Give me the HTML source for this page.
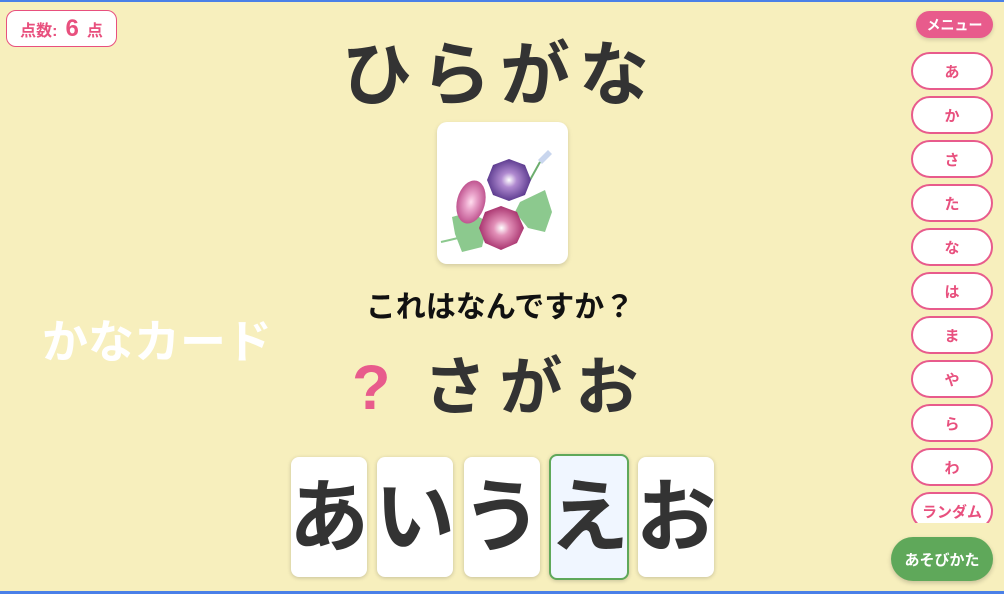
<!DOCTYPE html>
<html><head><meta charset="utf-8"><style>
*{margin:0;padding:0;box-sizing:border-box}
body{width:1004px;height:594px;overflow:hidden;background:#f7efbd;font-family:"Liberation Sans","Noto Sans CJK JP",sans-serif;position:relative;border-top:2px solid #4a80e8;border-bottom:3px solid #4a80e8}
.a{position:absolute}
.score{left:6px;top:8px;width:111px;height:37px;border:1.5px solid #e8507e;border-radius:10px;background:#fff;color:#e8507e;font-size:16px;font-weight:bold;display:flex;align-items:center;justify-content:center;gap:4px}
.score b{font-size:24px;margin:0 4px}
.title{left:0;width:1000px;top:28px;text-align:center;font-size:70px;font-weight:bold;color:#333;letter-spacing:9px;line-height:90px}
.card{left:437px;top:120px;width:131px;height:142px;background:#fff;border-radius:10px;box-shadow:0 2px 5px rgba(0,0,0,.15)}
.q{left:0;width:1000px;top:284px;text-align:center;font-size:30px;font-weight:bold;color:#111;line-height:44px}
.ans{left:352px;top:346px;font-size:63px;font-weight:bold;color:#333;line-height:80px;letter-spacing:13px}
.ans span{color:#e85b8c;margin-right:20px}
.kana{left:42px;top:310px;font-size:46px;font-weight:bold;color:#fff;line-height:60px}
.c{top:455px;width:76px;height:120px;background:#fff;border-radius:8px;box-shadow:0 1px 4px rgba(0,0,0,.2);font-size:80px;font-weight:bold;color:#333;display:flex;align-items:center;justify-content:center;padding-bottom:12px}
.menu{left:916px;top:9px;width:77px;height:27px;background:#e85b8c;color:#fff;font-size:14px;font-weight:bold;border-radius:14px;display:flex;align-items:center;justify-content:center;box-shadow:0 2px 4px rgba(0,0,0,.15)}
.list{left:905px;top:48px;width:95px;height:473px;overflow:hidden}
.b{position:absolute;left:6px;width:82px;height:38px;background:#fff;border:2px solid #e85b8c;border-radius:19px;color:#e8507e;font-size:15px;font-weight:bold;display:flex;align-items:center;justify-content:center}
.play{left:891px;top:535px;width:102px;height:44px;background:#5fa85a;color:#fff;font-size:15px;font-weight:bold;border-radius:22px;display:flex;align-items:center;justify-content:center;box-shadow:0 2px 5px rgba(0,0,0,.2)}
</style></head><body>
<div class="a score">点数:<b>6</b>点</div>
<div class="a title">ひらがな</div>
<div class="a card"><svg width="131" height="142" viewBox="437 120 131 142">
<defs>
<radialGradient id="p1"><stop offset="0" stop-color="#fff"/><stop offset=".35" stop-color="#b08ad0"/><stop offset="1" stop-color="#5b3a8e"/></radialGradient>
<radialGradient id="p2"><stop offset="0" stop-color="#fff"/><stop offset=".35" stop-color="#e290b8"/><stop offset="1" stop-color="#a8336e"/></radialGradient>
<radialGradient id="p3"><stop offset="0" stop-color="#fde"/><stop offset=".4" stop-color="#e8a0c8"/><stop offset="1" stop-color="#c05590"/></radialGradient>
</defs>
<path d="M538 158 L548 148 L552 152 L542 162 Z" fill="#c9d6ee"/>
<path d="M540 160 L530 178" stroke="#6dae6e" stroke-width="2" fill="none"/>
<path d="M520 200 L545 188 L552 210 L545 230 L528 226 L515 210 Z" fill="#8cc98e"/>
<path d="M452 215 L470 210 L488 220 L482 245 L462 250 L455 232 Z" fill="#8cc98e"/>
<path d="M441 240 Q450 238 458 236" stroke="#8cc98e" stroke-width="2" fill="none"/>
<ellipse cx="471" cy="200" rx="14" ry="22" transform="rotate(15 471 200)" fill="url(#p3)"/>
<polygon points="509,157 525,163 531,178 525,193 509,199 493,193 487,178 493,163" fill="url(#p1)"/>
<polygon points="501,204 517,210 524,226 517,241 501,248 485,241 479,226 485,210" fill="url(#p2)"/>
</svg></div>
<div class="a q">これはなんですか？</div>
<div class="a ans"><span>?</span>さがお</div>
<div class="a kana">かなカード</div>
<div class="a c" style="left:291px">あ</div>
<div class="a c" style="left:377px">い</div>
<div class="a c" style="left:464px">う</div>
<div class="a c" style="left:549px;top:452px;width:80px;height:126px;background:#f0f6ff;border:2px solid #5fa85a">え</div>
<div class="a c" style="left:638px">お</div>
<div class="a menu">メニュー</div>
<div class="a list">
<div class="b" style="top:2px">あ</div>
<div class="b" style="top:46px">か</div>
<div class="b" style="top:90px">さ</div>
<div class="b" style="top:134px">た</div>
<div class="b" style="top:178px">な</div>
<div class="b" style="top:222px">は</div>
<div class="b" style="top:266px">ま</div>
<div class="b" style="top:310px">や</div>
<div class="b" style="top:354px">ら</div>
<div class="b" style="top:398px">わ</div>
<div class="b" style="top:442px">ランダム</div>
</div>
<div class="a play">あそびかた</div>
</body></html>
